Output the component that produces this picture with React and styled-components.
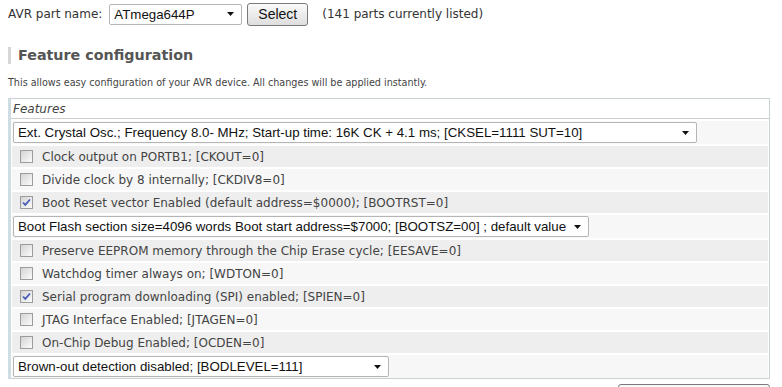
import React from "react";
import styled, { createGlobalStyle } from "styled-components";

const GlobalStyle = createGlobalStyle`
  body {
    margin: 0;
    background: #fff;
    font-family: "DejaVu Sans", Verdana, sans-serif;
    color: #333;
  }
`;

const Page = styled.div`
  padding: 3px 8px 0 8px;
  width: 762px;
`;

const TopBar = styled.div`
  display: flex;
  align-items: center;
  height: 22px;
  font-size: 12px;
  color: #333;
`;

const PartLabel = styled.span`
  margin-right: 7px;
`;

const SelectWrap = styled.div`
  position: relative;
  width: ${({ $w }) => $w}px;
  height: 21px;
  flex: none;
`;

const NativeSelect = styled.select`
  appearance: none;
  -webkit-appearance: none;
  width: 100%;
  height: 100%;
  margin: 0;
  padding: 0 8px 0 4px;
  border: 1px solid #b5b5b5;
  border-radius: 2px;
  background: #fff;
  font-family: "Liberation Sans", Arial, sans-serif;
  font-size: 13.3px;
  color: #111;
  outline: none;
`;

const Arrow = styled.svg`
  position: absolute;
  right: 8px;
  top: 50%;
  margin-top: -2px;
  pointer-events: none;
`;

const Button = styled.button`
  height: 23px;
  margin-left: 5px;
  padding: 0 10px;
  border: 1px solid #7a7a7a;
  border-radius: 3px;
  background: linear-gradient(#fafafa, #dedede);
  font-family: "Liberation Sans", Arial, sans-serif;
  font-size: 14px;
  color: #111;
`;

const Count = styled.span`
  margin-left: 14px;
`;

const Heading = styled.h2`
  margin: 22px 0 0 0;
  height: 17px;
  line-height: 17px;
  padding-left: 7px;
  border-left: 3px solid #d6d6d6;
  font-size: 14.3px;
  font-weight: bold;
  color: #555;
`;

const Intro = styled.p`
  margin: 12px 0 0 0;
  height: 13px;
  line-height: 13px;
  font-family: "DejaVu Sans Condensed", "DejaVu Sans", sans-serif;
  font-size: 10.7px;
  color: #444;
`;

const Fieldset = styled.div`
  margin-top: 9px;
  border: 1px solid #c9d2d4;
  border-left: 3px solid #cfdde2;
  padding: 0 1px;
  display: flex;
  flex-direction: column;
  gap: 2px;
`;

const Legend = styled.div`
  height: 19px;
  line-height: 21px;
  margin: 0 -1px;
  padding-left: 2px;
  border-bottom: 1px solid #cfcfcf;
  font-size: 12px;
  font-style: italic;
  color: #444;
`;

const Row = styled.div`
  display: flex;
  align-items: center;
  height: ${({ $select }) => ($select ? 23 : 21)}px;
  padding-left: ${({ $select }) => ($select ? 1 : 8)}px;
  background: ${({ $odd }) => ($odd ? "#eeeeee" : "#f7f7f7")};
  font-size: 12px;
  color: #444;
`;

const Box = styled.span`
  width: 11px;
  height: 11px;
  flex: none;
  border: 1px solid #9c9c9c;
  background: linear-gradient(135deg, #d4d4d4, #fbfbfb);
  margin-right: 9px;
  display: flex;
  align-items: center;
  justify-content: center;
`;

const BottomButton = styled.div`
  margin: 5px 0 0 auto;
  width: 150px;
  height: 20px;
  border: 1px solid #7a7a7a;
  border-radius: 3px;
  background: linear-gradient(#fafafa, #dedede);
`;

function SelectBox({ width, value }) {
  return (
    <SelectWrap $w={width}>
      <NativeSelect defaultValue={value}>
        <option>{value}</option>
      </NativeSelect>
      <Arrow width="7" height="4" viewBox="0 0 7 4">
        <path d="M0 0h7L3.5 4z" fill="#111" />
      </Arrow>
    </SelectWrap>
  );
}

function Check({ checked }) {
  return (
    <Box>
      {checked && (
        <svg width="9" height="9" viewBox="0 0 9 9">
          <path d="M1 4.5l2.3 2.4L8 1.5" stroke="#4a5cb8" strokeWidth="1.8" fill="none" />
        </svg>
      )}
    </Box>
  );
}

const rows = [
  { type: "select", width: 684, value: "Ext. Crystal Osc.; Frequency 8.0- MHz; Start-up time: 16K CK + 4.1 ms; [CKSEL=1111 SUT=10]" },
  { type: "check", label: "Clock output on PORTB1; [CKOUT=0]" },
  { type: "check", label: "Divide clock by 8 internally; [CKDIV8=0]" },
  { type: "check", label: "Boot Reset vector Enabled (default address=$0000); [BOOTRST=0]", checked: true },
  { type: "select", width: 576, value: "Boot Flash section size=4096 words Boot start address=$7000; [BOOTSZ=00] ; default value" },
  { type: "check", label: "Preserve EEPROM memory through the Chip Erase cycle; [EESAVE=0]" },
  { type: "check", label: "Watchdog timer always on; [WDTON=0]" },
  { type: "check", label: "Serial program downloading (SPI) enabled; [SPIEN=0]", checked: true },
  { type: "check", label: "JTAG Interface Enabled; [JTAGEN=0]" },
  { type: "check", label: "On-Chip Debug Enabled; [OCDEN=0]" },
  { type: "select", width: 376, value: "Brown-out detection disabled; [BODLEVEL=111]" },
];

export default function App() {
  return (
    <>
      <GlobalStyle />
      <Page>
        <TopBar>
          <PartLabel>AVR part name:</PartLabel>
          <SelectBox width={133} value="ATmega644P" />
          <Button>Select</Button>
          <Count>(141 parts currently listed)</Count>
        </TopBar>
        <Heading>Feature configuration</Heading>
        <Intro>This allows easy configuration of your AVR device. All changes will be applied instantly.</Intro>
        <Fieldset>
          <Legend>Features</Legend>
          {rows.map((r, i) =>
            r.type === "select" ? (
              <Row key={i} $select $odd={i % 2 === 1}>
                <SelectBox width={r.width} value={r.value} />
              </Row>
            ) : (
              <Row key={i} $odd={i % 2 === 1}>
                <Check checked={r.checked} />
                {r.label}
              </Row>
            )
          )}
        </Fieldset>
        <BottomButton />
      </Page>
    </>
  );
}
